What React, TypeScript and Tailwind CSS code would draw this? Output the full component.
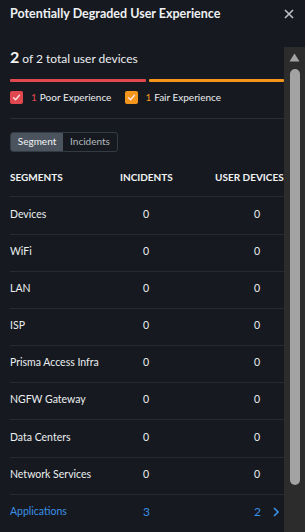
import React from "react";

const rows: { name: string; inc: string; dev: string; link?: boolean }[] = [
  { name: "Devices", inc: "0", dev: "0" },
  { name: "WiFi", inc: "0", dev: "0" },
  { name: "LAN", inc: "0", dev: "0" },
  { name: "ISP", inc: "0", dev: "0" },
  { name: "Prisma Access Infra", inc: "0", dev: "0" },
  { name: "NGFW Gateway", inc: "0", dev: "0" },
  { name: "Data Centers", inc: "0", dev: "0" },
  { name: "Network Services", inc: "0", dev: "0" },
  { name: "Applications", inc: "3", dev: "2", link: true },
];

function Check() {
  return (
    <svg width="9" height="9" viewBox="0 0 9 9" fill="none">
      <path d="M1.5 4.8 L3.6 6.8 L7.5 2.3" stroke="#fde8e8" strokeWidth="1.3" strokeLinecap="round" strokeLinejoin="round" />
    </svg>
  );
}

export default function App() {
  return (
    <div
      className="w-[305px] h-[532px] bg-[#161a20] text-[#eceef0] flex flex-col overflow-hidden"
      style={{ fontFamily: "Lato, 'Noto Sans', sans-serif" }}
    >
      <div className="h-[47px] shrink-0 flex items-start justify-between pl-[10px] pr-[11px] pt-[4px]">
        <div className="text-[12.5px] leading-[20px] font-bold text-[#eef0f2]">Potentially Degraded User Experience</div>
        <svg width="10" height="10" viewBox="0 0 10 10" className="mt-[5px]">
          <path d="M1 1 L9 9 M9 1 L1 9" stroke="#b9bdc2" strokeWidth="1.7" />
        </svg>
      </div>
      <div className="flex flex-1 min-h-0">
        <div className="flex-1 pl-[10px] flex flex-col">
          <div className="leading-[20px] flex items-baseline">
            <span className="text-[16px] font-bold text-[#f2f3f5]">2</span>
            <span className="text-[12px] ml-[3px] text-[#eceef0]">of 2 total user devices</span>
          </div>
          <div className="mt-[10px] flex h-[3px] gap-[3px]">
            <div className="flex-1 bg-[#e0474f] rounded-[1px]" />
            <div className="flex-1 bg-[#f5961c] rounded-[1px]" />
          </div>
          <div className="mt-[9px] flex items-center h-[13px] text-[10px]">
            <div className="w-[13px] h-[13px] rounded-[2px] bg-[#e0474f] flex items-center justify-center">
              <Check />
            </div>
            <span className="ml-[8px] text-[#e0474f]">1</span>
            <span className="ml-[3px] text-[#eceef0]">Poor Experience</span>
            <div className="ml-[14px] w-[13px] h-[13px] rounded-[2px] bg-[#f5961c] flex items-center justify-center">
              <Check />
            </div>
            <span className="ml-[7px] text-[#f5961c]">1</span>
            <span className="ml-[3px] text-[#eceef0]">Fair Experience</span>
          </div>
          <div className="mt-[14px] h-px bg-[#2a2f36]" />
          <div className="mt-[13px] flex">
            <div className="flex h-[20px] rounded-[3px] border border-[#353b43] text-[10px] overflow-hidden">
              <div className="w-[52px] bg-[#4b545e] text-[#f3f4f6] flex items-center justify-center">Segment</div>
              <div className="w-[54px] text-[#b4b9bf] flex items-center justify-center">Incidents</div>
            </div>
          </div>
          <div className="mt-[10px] h-[36px] flex items-center pb-[3px] border-b border-[#262b32] text-[10px] font-bold uppercase text-[#f1f2f4] whitespace-nowrap">
            <div className="w-[110px]">Segments</div>
            <div className="w-[95px]">Incidents</div>
            <div>User Devices</div>
          </div>
          {rows.map((r) => (
            <div
              key={r.name}
              className={`h-[37.75px] flex items-center pb-[2px] text-[10.5px] whitespace-nowrap ${
                r.link ? "text-[#3a8fe6]" : "border-b border-[#262b32] text-[#eceef0]"
              }`}
            >
              <div className="w-[133px]">{r.name}</div>
              <div className={`w-[111px] ${r.link ? "text-[12px]" : ""}`}>{r.inc}</div>
              <div className={`flex items-center ${r.link ? "text-[12px]" : ""}`}>
                <span>{r.dev}</span>
                {r.link && (
                  <svg width="6" height="10" viewBox="0 0 6 10" className="ml-[12px]">
                    <path d="M1 1 L5 5 L1 9" stroke="#3a8fe6" strokeWidth="1.6" fill="none" />
                  </svg>
                )}
              </div>
            </div>
          ))}
        </div>
        <div className="w-[21px] shrink-0 bg-[#2c2c2c] flex flex-col items-center pt-[6px]">
          <svg width="11" height="9" viewBox="0 0 11 9">
            <path d="M5.5 0.5 L10.5 8.5 L0.5 8.5 Z" fill="#a3a3a3" />
          </svg>
          <div className="mt-[7px] w-[10px] h-[416px] rounded-full bg-[#a3a3a3]" />
        </div>
      </div>
    </div>
  );
}
